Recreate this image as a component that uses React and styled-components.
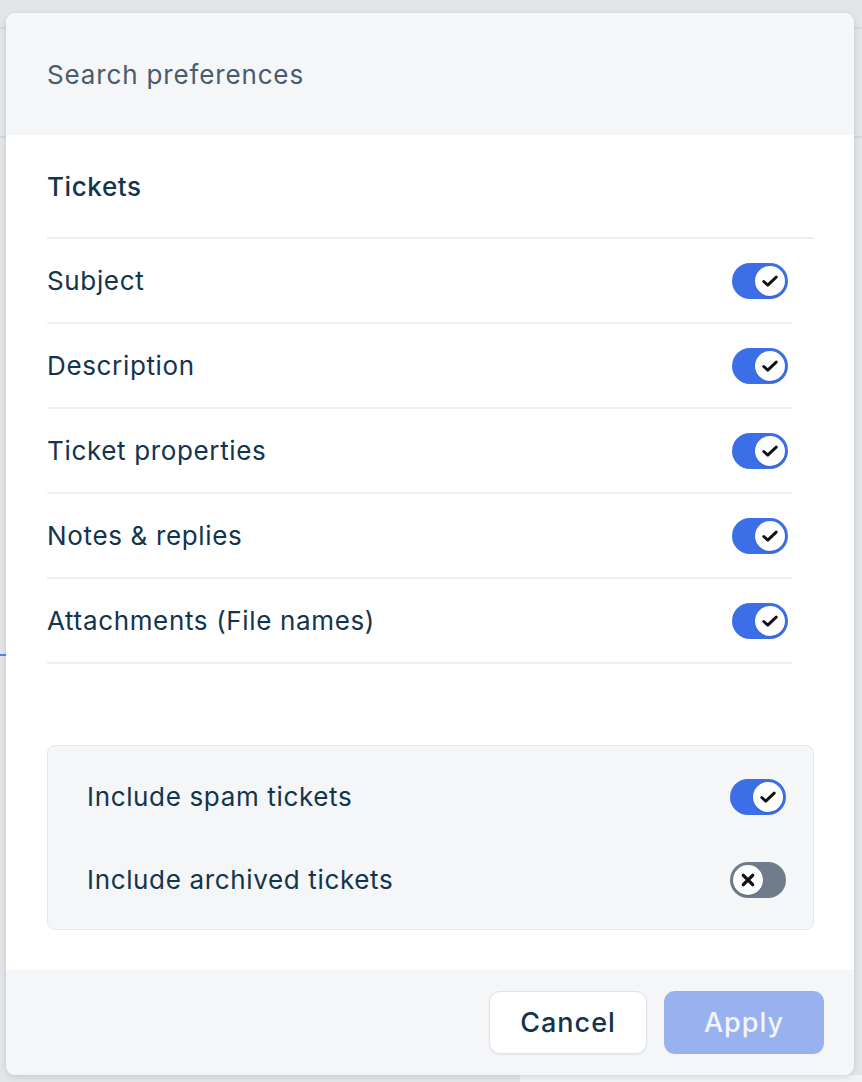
import React, { useState } from "react";
import styled, { createGlobalStyle } from "styled-components";

const GlobalStyle = createGlobalStyle`
  html, body {
    margin: 0;
    padding: 0;
    background: #e3e5e8;
    font-family: Inter, "Noto Sans", "Liberation Sans", sans-serif;
    -webkit-font-smoothing: antialiased;
  }
`;

// dimmed page behind the dialog
const Backdrop = styled.div`
  position: relative;
  width: 862px;
  height: 1082px;
  overflow: hidden;
  background: #e3e5e8;
`;

const BackTopBar = styled.div`
  height: 27px;
  border-bottom: 2px solid #d3d8de;
`;

const BackToolbar = styled.div`
  height: 107px;
  border-bottom: 2px solid #d3d8de;
`;

const BackBody = styled.div`
  display: flex;
  height: 945px;
`;

const BackLeft = styled.div`
  flex: 0 0 520px;
  display: flex;
  flex-direction: column;
  padding-top: 516px;
`;

const BackTab = styled.div`
  width: 14px;
  height: 2px;
  background: #5c7fd8;
`;

const BackRight = styled.div`
  flex: 1;
  display: flex;
  flex-direction: column;
  justify-content: flex-end;
`;

const BackField = styled.div`
  height: 8px;
  background: #f1f2f4;
  padding: 0 0 0 33px;
  font-size: 22px;
  color: #5d6b7a;
  line-height: 30px;
  overflow: visible;
  span { color: #c0392b; }
`;

const Modal = styled.div`
  position: absolute;
  left: 6px;
  top: 13px;
  width: 848px;
  height: 1062px;
  display: flex;
  flex-direction: column;
  background: #ffffff;
  border-radius: 9px;
  overflow: hidden;
  box-shadow: 0 2px 6px rgba(18, 52, 77, 0.12), 0 0 2px rgba(18, 52, 77, 0.08);
`;

const Header = styled.div`
  flex: 0 0 122px;
  display: flex;
  align-items: center;
  padding: 0 41px;
  background: #f5f6f8;
  font-size: 26px;
  font-weight: 400;
  letter-spacing: 0.85px;
  color: #4a5b6b;
`;

const Body = styled.div`
  flex: 1;
  display: flex;
  flex-direction: column;
  padding: 0 40px 40px 41px;
`;

const SectionTitle = styled.div`
  height: 102px;
  display: flex;
  align-items: center;
  border-bottom: 2px solid #ebeef2;
  font-size: 26px;
  font-weight: 500;
  letter-spacing: 0.6px;
  color: #12344d;
`;

const List = styled.div`
  width: 745px;
  display: flex;
  flex-direction: column;
`;

const Row = styled.div`
  height: 83px;
  display: flex;
  align-items: center;
  justify-content: space-between;
  padding-right: ${({ $inset }) => $inset}px;
  border-bottom: ${({ $divider }) => ($divider ? "2px solid #ebeef2" : "none")};
`;

const Label = styled.div`
  font-size: 26px;
  font-weight: 400;
  color: #12344d;
  letter-spacing: 0.65px;
`;

const ExtraBox = styled.div`
  margin-top: 81px;
  display: flex;
  flex-direction: column;
  padding: 9px 27px 8px 39px;
  background: #f5f6f8;
  border: 1px solid #e5e9ee;
  border-radius: 8px;
`;

const Track = styled.button`
  width: 56px;
  height: 36px;
  padding: 0 3px;
  border: none;
  border-radius: 18px;
  display: flex;
  align-items: center;
  justify-content: ${({ $on }) => ($on ? "flex-end" : "flex-start")};
  background: ${({ $on }) => ($on ? "#3c6fe7" : "#6f7c8b")};
  cursor: pointer;
`;

const Knob = styled.span`
  width: 30px;
  height: 30px;
  border-radius: 50%;
  background: #ffffff;
  display: flex;
  align-items: center;
  justify-content: center;
  box-shadow: 0 1px 2px rgba(0, 0, 0, 0.15);
`;

const Footer = styled.div`
  flex: 0 0 106px;
  display: flex;
  align-items: flex-start;
  justify-content: flex-end;
  gap: 17px;
  padding: 21px 30px 0 0;
  box-sizing: border-box;
  background: #f5f6f8;
`;

const Button = styled.button`
  height: 63px;
  width: ${({ $w }) => $w}px;
  border-radius: 11px;
  font-family: inherit;
  font-size: 27px;
  font-weight: 500;
  letter-spacing: 1px;
  cursor: pointer;
  border: ${({ $primary }) => ($primary ? "none" : "1px solid #e1e5ea")};
  background: ${({ $primary }) => ($primary ? "#98b2f0" : "#ffffff")};
  color: ${({ $primary }) => ($primary ? "#f2f5fe" : "#12344d")};
  box-shadow: ${({ $primary }) => ($primary ? "none" : "0 1px 2px rgba(18,52,77,0.08)")};
`;

const Toggle = ({ on, onClick }) => (
  <Track $on={on} onClick={onClick}>
    <Knob>
      {on ? (
        <svg width="20" height="20" viewBox="0 0 18 18" fill="none">
          <path d="M3.4 9.4l3.6 3.3 7.6-7.2" stroke="#111" strokeWidth="2.6" strokeLinecap="round" strokeLinejoin="round" />
        </svg>
      ) : (
        <svg width="20" height="20" viewBox="0 0 18 18" fill="none">
          <path d="M4.8 4.8l8.4 8.4M13.2 4.8l-8.4 8.4" stroke="#111" strokeWidth="3" strokeLinecap="round" />
        </svg>
      )}
    </Knob>
  </Track>
);

const fields = [
  "Subject",
  "Description",
  "Ticket properties",
  "Notes & replies",
  "Attachments (File names)",
];

const App = () => {
  const [enabled, setEnabled] = useState(fields.map(() => true));
  const [spam, setSpam] = useState(true);
  const [archived, setArchived] = useState(false);

  const flip = (i) => setEnabled(enabled.map((v, idx) => (idx === i ? !v : v)));

  return (
    <>
      <GlobalStyle />
      <Backdrop>
        <BackTopBar />
        <BackToolbar />
        <BackBody>
          <BackLeft>
            <BackTab />
          </BackLeft>
          <BackRight>
            <BackField>
              Type <span>*</span>
            </BackField>
          </BackRight>
        </BackBody>

        <Modal>
          <Header>Search preferences</Header>
          <Body>
            <SectionTitle>Tickets</SectionTitle>
            <List>
              {fields.map((f, i) => (
                <Row key={f} $divider $inset={4}>
                  <Label>{f}</Label>
                  <Toggle on={enabled[i]} onClick={() => flip(i)} />
                </Row>
              ))}
            </List>
            <ExtraBox>
              <Row $inset={0}>
                <Label>Include spam tickets</Label>
                <Toggle on={spam} onClick={() => setSpam(!spam)} />
              </Row>
              <Row $inset={0}>
                <Label>Include archived tickets</Label>
                <Toggle on={archived} onClick={() => setArchived(!archived)} />
              </Row>
            </ExtraBox>
          </Body>
          <Footer>
            <Button $w={158}>Cancel</Button>
            <Button $w={160} $primary>Apply</Button>
          </Footer>
        </Modal>
      </Backdrop>
    </>
  );
};

export default App;
